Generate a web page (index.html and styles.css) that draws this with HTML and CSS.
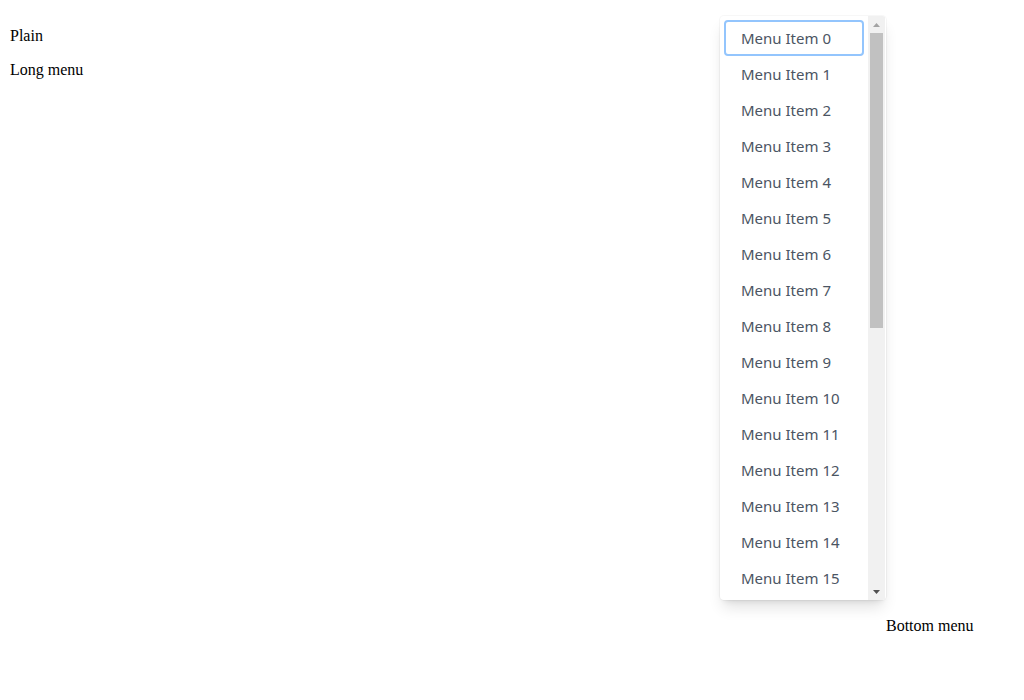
FILE: index.html
```html
<!DOCTYPE html>
<html>
<head>
<meta charset="utf-8">
<link rel="stylesheet" href="styles.css">
</head>
<body>
<p class="trigger">Plain</p>
<p class="trigger">Long menu</p>
<div class="menu" role="menu">
  <div class="list">
    <div class="item focused">Menu Item 0</div>
    <div class="item">Menu Item 1</div>
    <div class="item">Menu Item 2</div>
    <div class="item">Menu Item 3</div>
    <div class="item">Menu Item 4</div>
    <div class="item">Menu Item 5</div>
    <div class="item">Menu Item 6</div>
    <div class="item">Menu Item 7</div>
    <div class="item">Menu Item 8</div>
    <div class="item">Menu Item 9</div>
    <div class="item">Menu Item 10</div>
    <div class="item">Menu Item 11</div>
    <div class="item">Menu Item 12</div>
    <div class="item">Menu Item 13</div>
    <div class="item">Menu Item 14</div>
    <div class="item">Menu Item 15</div>
  </div>
  <div class="scrollbar">
    <div class="arrow"><svg width="7" height="4" viewBox="0 0 7 4"><polygon points="3.5,0 7,4 0,4" fill="#a3a3a3"/></svg></div>
    <div class="track"><div class="thumb"></div></div>
    <div class="arrow"><svg width="7" height="4" viewBox="0 0 7 4"><polygon points="0,0 7,0 3.5,4" fill="#505050"/></svg></div>
  </div>
</div>
<div class="bottom">Bottom menu</div>
</body>
</html>
```
FILE: styles.css
```css
body {
  margin: 8px;
  padding-top: 3px;
  font-family: "Liberation Serif", serif;
  font-size: 16px;
  color: #000;
}
.trigger {
  margin: 16px 0;
  padding-left: 2px;
}
.bottom {
  margin-top: 538px;
  padding-left: 878px;
}
.menu {
  position: absolute;
  left: 720px;
  top: 16px;
  width: 166px;
  height: 584px;
  box-sizing: border-box;
  display: flex;
  padding-right: 1px;
  overflow: hidden;
  background: #fff;
  border-radius: 4px;
  box-shadow: 0 10px 15px -3px rgba(0,0,0,0.12), 0 4px 6px -4px rgba(0,0,0,0.12), 0 0 0 1px rgba(0,0,0,0.03);
  font-family: "Noto Sans", "Open Sans", sans-serif;
  font-size: 15px;
  color: #4b5563;
}
.list {
  flex: 1;
  padding: 4px;
}
.item {
  height: 36px;
  box-sizing: border-box;
  display: flex;
  align-items: center;
  padding: 0 12px 0 15px;
  border-radius: 4px;
  border: 2px solid transparent;
  white-space: nowrap;
}
.item.focused {
  border-color: #93c5fd;
}
.scrollbar {
  width: 17px;
  display: flex;
  flex-direction: column;
  background: #f1f1f1;
}
.arrow {
  height: 17px;
  display: flex;
  align-items: center;
  justify-content: center;
}
.arrow svg {
  display: block;
}
.track {
  flex: 1;
}
.thumb {
  height: 295px;
  margin: 0 2px;
  background: #c1c1c1;
}
```
